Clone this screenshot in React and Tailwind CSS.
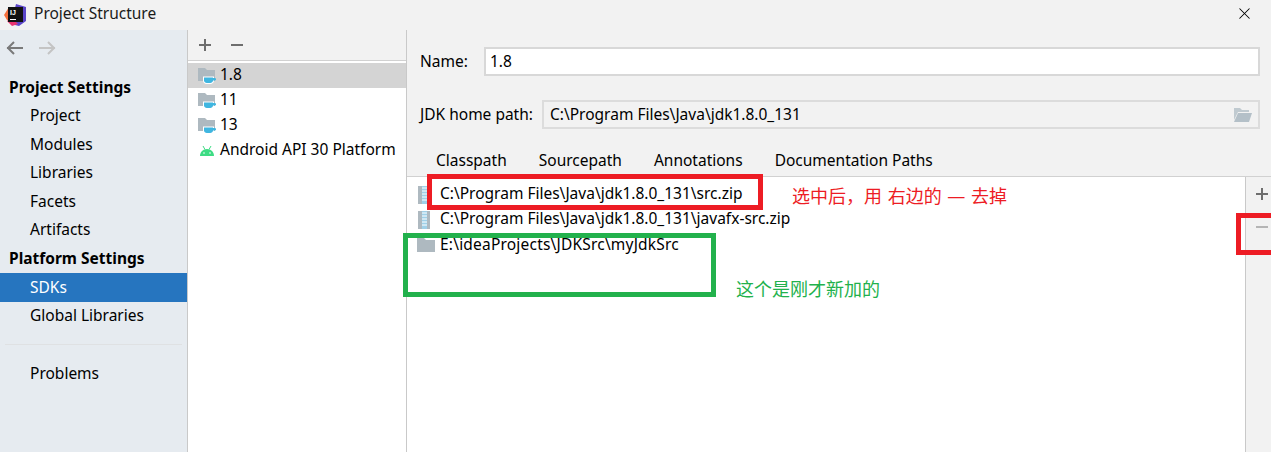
import React from "react";
import { X } from "lucide-react";

const FONT = "font-['Noto_Sans','Noto_Sans_CJK_SC',sans-serif]";

function Plus({ color = "#6e6e6e" }) {
  return (
    <svg width="14" height="14" viewBox="0 0 14 14">
      <path d="M6 1h2v5h5v2H8v5H6V8H1V6h5z" fill={color} />
    </svg>
  );
}

function Minus({ color = "#6e6e6e" }) {
  return (
    <svg width="14" height="14" viewBox="0 0 14 14">
      <rect x="1" y="6" width="12" height="2" fill={color} />
    </svg>
  );
}

function Logo() {
  return (
    <svg width="22" height="22" viewBox="0 0 22 22">
      <path d="M0 11 L5 3 L12 5 L8 18 L3 16z" fill="#f5703c" />
      <path d="M12 0 L22 3 L22 17 L15 22 L7 20z" fill="#5a45c8" />
      <path d="M3 17 L8 22 L14 20 L8 14z" fill="#e8336f" />
      <rect x="4" y="3" width="15" height="15" fill="#111" />
      <text x="6" y="10.500" fontSize="7" fontWeight="700" fill="#fff" fontFamily="Liberation Sans">IJ</text>
      <rect x="6" y="15" width="6" height="1" fill="#fff" />
    </svg>
  );
}

function JdkIcon() {
  return (
    <svg width="20" height="18" viewBox="0 0 20 18">
      <path d="M1 1h7l2 2h8v11H1z" fill="#aeb9c0" />
      <path d="M6 9.500h11v4c0 2-1.800 3.500-3.600 3.500H9.600C7.800 17 6 15.500 6 13.500z" fill="#fff" />
      <path d="M7 10.500h9v3c0 1.500-1.400 2.500-2.800 2.500h-3.400C8.400 16 7 15 7 13.500z" fill="#40b6e0" />
      <rect x="15" y="11" width="4" height="2.500" rx="1.200" fill="#40b6e0" />
    </svg>
  );
}

function AndroidIcon() {
  return (
    <svg width="16" height="12" viewBox="0 0 16 12">
      <path d="M1 11c0-4 3-7 7-7s7 3 7 7z" fill="#3ddc84" />
      <path d="M4 1l2 3.500M12 1l-2 3.500" stroke="#3ddc84" strokeWidth="1" />
      <circle cx="5" cy="8" r=".8" fill="#fff" />
      <circle cx="11" cy="8" r=".8" fill="#fff" />
    </svg>
  );
}

function ZipIcon() {
  return (
    <svg width="12" height="18" viewBox="0 0 12 18">
      <rect x="0" y="0" width="12" height="18" fill="#aeb9c0" />
      <rect x="4" y="0" width="5" height="18" fill="#9fd0e8" />
      <path d="M4 2h5M4 5h5M4 8h5M4 11h5M4 14h5" stroke="#fff" strokeWidth="1" />
    </svg>
  );
}

function OpenFolderIcon() {
  return (
    <svg width="20" height="16" viewBox="0 0 20 16">
      <path d="M1 1h6l2 2h7v2H5L1 13z" fill="#c0cad0" />
      <path d="M5 6h14l-3 9H1z" fill="#b4c0c8" />
    </svg>
  );
}

function SideItem({ label, active, low }) {
  return (
    <div className={`flex h-[28.600px] items-center pl-[30px] text-[15.500px] ${low ? "" : "pb-px"} ${active ? "bg-[#2675bf] text-white" : "text-black"}`}>
      {label}
    </div>
  );
}

function SideTitle({ label }) {
  return <div className="flex h-[28.600px] items-center pl-[9px] text-[15.500px] font-bold text-black">{label}</div>;
}

function SdkRow({ label, selected, icon }) {
  return (
    <div className={`flex h-[25px] items-center gap-[3px] pl-[9px] text-[15.500px] text-black ${selected ? "bg-[#d4d4d4]" : ""}`}>
      <span className="flex w-[20px] justify-center pt-px">{icon}</span>
      <span className="pb-[2px]">{label}</span>
    </div>
  );
}

function PathRow({ label, icon }) {
  return (
    <div className="flex h-[25px] items-center text-[15.500px] text-black">
      <span className="flex w-[33px] pl-[11px]">{icon}</span>
      <span className="pb-[2px]">{label}</span>
    </div>
  );
}

export default function App() {
  return (
    <div className={`relative flex h-[452px] w-[1271px] flex-col overflow-hidden bg-[#f2f2f2] ${FONT}`}>
      {/* title bar */}
      <div className="flex h-[30px] shrink-0 items-center pb-px pl-[4px] pr-[17px] text-[15.500px] text-[#1a1a1a]">
        <Logo />
        <span className="mb-[1px] ml-[8px]">Project Structure</span>
        <X size={19} strokeWidth={1.300} className="mb-[3px] ml-auto text-black" />
      </div>

      <div className="flex min-h-0 flex-1">
        {/* sidebar */}
        <div className="w-[188px] shrink-0 border-r border-[#c9c9c9] bg-[#e6ebf0]">
          <div className="flex h-[43px] items-start gap-[14px] pl-[6px] pt-[10px]">
            <svg width="18" height="16" viewBox="0 0 18 16">
              <path d="M1 8h16M8 2L2 8l6 6" fill="none" stroke="#7a7a7a" strokeWidth="2" />
            </svg>
            <svg width="18" height="16" viewBox="0 0 18 16">
              <path d="M1 8h16M10 2l6 6-6 6" fill="none" stroke="#c4c4c4" strokeWidth="2" />
            </svg>
          </div>
          <SideTitle label="Project Settings" />
          <SideItem label="Project" />
          <SideItem label="Modules" low />
          <SideItem label="Libraries" />
          <SideItem label="Facets" />
          <SideItem label="Artifacts" />
          <SideTitle label="Platform Settings" />
          <SideItem label="SDKs" active low />
          <SideItem label="Global Libraries" low />
          <div className="mx-[5px] my-[14px] h-px bg-[#dfe1e3]" />
          <SideItem label="Problems" />
        </div>

        {/* sdk list */}
        <div className="w-[219px] shrink-0 border-r border-[#c9c9c9] bg-white">
          <div className="flex h-[31px] items-center gap-[18px] border-b border-[#d1d1d1] bg-[#f2f2f2] pl-[10px]">
            <Plus />
            <Minus />
          </div>
          <div className="pt-[2px]">
            <SdkRow label="1.8" selected icon={<JdkIcon />} />
            <SdkRow label="11" icon={<JdkIcon />} />
            <SdkRow label="13" icon={<JdkIcon />} />
            <SdkRow label="Android API 30 Platform" icon={<AndroidIcon />} />
          </div>
        </div>

        {/* details */}
        <div className="flex min-w-0 flex-1 flex-col">
          <div className="flex items-center pl-[13px] pr-[11px] pt-[17px] text-[15.500px] text-black">
            <span className="w-[64px]">Name:</span>
            <div className="flex h-[29px] flex-1 items-center border-2 border-[#d8d8d8] bg-white pl-[4px]">1.8</div>
          </div>
          <div className="flex items-center pl-[13px] pr-[11px] pt-[24px] text-[15.500px] text-black">
            <span className="w-[122px]">JDK home path:</span>
            <div className="flex h-[29px] flex-1 items-center justify-between border-2 border-[#dcdcdc] pl-[6px] pr-[5px]">
              <span>C:\Program Files\Java\jdk1.8.0_131</span>
              <OpenFolderIcon />
            </div>
          </div>
          <div className="mt-[20px] flex h-[27px] items-center gap-[32px] pb-[4px] pl-[29px] text-[15.500px] text-black">
            <span>Classpath</span>
            <span>Sourcepath</span>
            <span>Annotations</span>
            <span>Documentation Paths</span>
          </div>
          <div className="flex min-h-0 flex-1 border-t border-[#d1d1d1]">
            <div className="flex-1 bg-white pt-[5px]">
              <PathRow label="C:\Program Files\Java\jdk1.8.0_131\src.zip" icon={<ZipIcon />} />
              <PathRow label="C:\Program Files\Java\jdk1.8.0_131\javafx-src.zip" icon={<ZipIcon />} />
              <div className="flex h-[25px] items-center text-[15.500px] text-black">
                <span className="flex w-[33px] pl-[10px]">
                  <svg width="18" height="14" viewBox="0 0 18 14">
                    <path d="M0 0h7l2 2h9v12H0z" fill="#aeb9c0" />
                  </svg>
                </span>
                <span className="tracking-[0.200px]">E:\ideaProjects\JDKSrc\myJdkSrc</span>
              </div>
            </div>
            <div className="flex w-[26px] flex-col items-center gap-[19px] border-l border-[#c9c9c9] pl-[6px] pt-[10px]">
              <Plus />
              <Minus color="#b5b5b5" />
            </div>
          </div>
        </div>
      </div>

      {/* annotations drawn over the screenshot */}
      <div className="absolute left-[427px] top-[174px] h-[36px] w-[336px] border-[5px] border-[#ed1c24]" />
      <div className="absolute left-[403px] top-[233px] h-[64px] w-[313px] border-[5px] border-[#22b14c]" />
      <div className="absolute left-[1236px] top-[213px] h-[42px] w-[40px] border-[5px] border-[#ed1c24]" />
      <div className="absolute left-[792px] top-[185px] text-[18px] leading-[22px] text-[#ed1c24] [word-spacing:1px]">选中后，用 右边的 — 去掉</div>
      <div className="absolute left-[736px] top-[278px] text-[18px] leading-[22px] text-[#22b14c]">这个是刚才新加的</div>
    </div>
  );
}
